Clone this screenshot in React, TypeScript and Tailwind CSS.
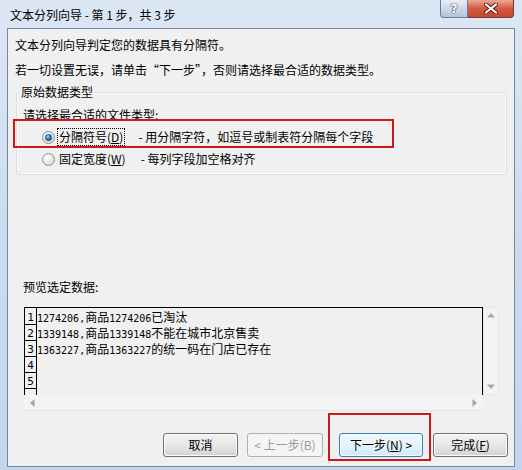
import React from "react";

function Mixed({ text }: { text: string }) {
  const parts = text.match(/[\x00-\x7f]+|[^\x00-\x7f]+/g) || [];
  return (
    <>
      {parts.map((p, i) =>
        /^[\x00-\x7f]+$/.test(p) ? (
          <span key={i} className="font-['DejaVu_Sans_Mono',monospace] text-[10px] whitespace-pre">
            {p}
          </span>
        ) : (
          <span key={i} className="text-[12px]">
            {p}
          </span>
        )
      )}
    </>
  );
}

function Radio({ checked }: { checked?: boolean }) {
  return (
    <svg width="13" height="13" viewBox="0 0 13 13" className="shrink-0">
      <defs>
        <radialGradient id={checked ? "rgc" : "rgu"} cx="0.4" cy="0.35" r="0.7">
          <stop offset="0" stopColor="#ffffff" />
          <stop offset="1" stopColor="#d6d6d6" />
        </radialGradient>
        <radialGradient id="dot" cx="0.4" cy="0.35" r="0.7">
          <stop offset="0" stopColor="#8fd0f5" />
          <stop offset="0.6" stopColor="#2b79b8" />
          <stop offset="1" stopColor="#15467a" />
        </radialGradient>
      </defs>
      <circle cx="6.5" cy="6.5" r="6" fill={`url(#${checked ? "rgc" : "rgu"})`} stroke="#8e8f8f" strokeWidth="1" />
      {checked && <circle cx="6.5" cy="6.5" r="3.2" fill="url(#dot)" stroke="#1d4f7f" strokeWidth="0.6" />}
    </svg>
  );
}

function Btn({
  children,
  variant = "normal",
  w,
}: {
  children: React.ReactNode;
  variant?: "normal" | "disabled" | "default";
  w: string;
}) {
  const base = "h-[24px] rounded-[3px] border flex items-center justify-center text-[12px] leading-4 shrink-0";
  const cls =
    variant === "disabled"
      ? "border-[#adb2b5] bg-[#f4f4f4] text-[#9a9a9a]"
      : variant === "default"
      ? "border-[#3c7fb1] bg-gradient-to-b from-[#f1f8fd] via-[#e6f3fb] to-[#cde8f8] shadow-[inset_0_0_0_1px_#f4fbff] text-black"
      : "border-[#707070] bg-gradient-to-b from-[#f2f2f2] via-[#e8e8e8] to-[#d2d2d2] shadow-[inset_0_0_0_1px_#fbfbfb] text-black";
  return <div className={`${base} ${cls} ${w}`}>{children}</div>;
}

export default function App() {
  const rows = [
    "1274206,商品1274206已淘汰",
    "1339148,商品1339148不能在城市北京售卖",
    "1363227,商品1363227的统一码在门店已存在",
    "",
    "",
    "",
  ];
  return (
    <div className="w-[522px] h-[470px] relative overflow-hidden bg-gradient-to-b from-[#dce7f4] via-[#cbdcf0] to-[#c3d6ee] font-['Noto_Sans_CJK_SC',sans-serif] text-[12px] text-black leading-4 flex flex-col">
      {/* Title bar */}
      <div className="h-[28px] flex items-start shrink-0">
        <div className="pl-[10px] pt-[6px] leading-[18px] text-[12px] text-black">文本分列向导 - 第 1 步，共 3 步</div>
        <div className="ml-auto mr-[8px] flex">
          <div className="w-[28px] h-[18px] rounded-bl-[4px] border border-t-0 border-[#6c7b91] bg-gradient-to-b from-[#e6eef8] via-[#cdd9e8] to-[#b3c4da] flex items-center justify-center">
            <span className="font-['DejaVu_Sans',sans-serif] font-bold text-[13px] leading-none text-white [text-shadow:0_0_1px_#334,0_0_1px_#334,0_0_1px_#334]">?</span>
          </div>
          <div className="w-[46px] h-[18px] rounded-br-[4px] border border-l-0 border-t-0 border-[#6b3a34] bg-gradient-to-b from-[#eba797] via-[#d25a44] to-[#c9452d] flex items-center justify-center">
            <svg width="14" height="11" viewBox="0 0 14 11">
              <path d="M2 1.5 L12 9.5 M12 1.5 L2 9.5" stroke="#4a1d16" strokeWidth="4" strokeLinecap="round" />
              <path d="M2 1.5 L12 9.5 M12 1.5 L2 9.5" stroke="#ffffff" strokeWidth="2.2" strokeLinecap="round" />
            </svg>
          </div>
        </div>
      </div>

      {/* Client area */}
      <div className="mx-[7px] mb-[3px] flex-1 border border-[#7587a0] bg-[#f0f0f0] flex flex-col">
        <div className="mt-[8px] pl-[7px] h-4">文本分列向导判定您的数据具有分隔符。</div>
        <div className="mt-[9px] pl-[7px] h-4">若一切设置无误，请单击“下一步”，否则请选择最合适的数据类型。</div>

        <fieldset className="mt-[6px] ml-[8px] mr-[7px] h-[91px] border border-[#d5dfe5] rounded-[3px] p-0 m-0 shadow-[inset_0_0_0_1px_#fafafa]">
          <legend className="ml-[3px] px-[1px] leading-4">原始数据类型</legend>
          <div className="pl-[6px] mt-[7px] h-4">请选择最合适的文件类型:</div>
          <div className="mt-[5px] h-[18px] flex items-center pl-[25px]">
            <Radio checked />
            <div className="ml-[2px] h-[18px] px-[1px] border border-dotted border-black flex items-center">
              分隔符号(<span className="underline">D</span>)
            </div>
            <div className="ml-[13px]">- 用分隔字符，如逗号或制表符分隔每个字段</div>
          </div>
          <div className="mt-[4px] h-[18px] flex items-center pl-[25px]">
            <Radio />
            <div className="ml-[2px] h-[18px] px-[1px] border border-transparent flex items-center">
              固定宽度(<span className="underline">W</span>)
            </div>
            <div className="ml-[13px]">- 每列字段加空格对齐</div>
          </div>
        </fieldset>

        <div className="mt-[104px] pl-[15px] h-4">预览选定数据:</div>

        <div className="mt-[12px] ml-[16px] flex">
          <div className="flex flex-col w-[459px]">
            <div className="h-[88px] border-t border-l border-r border-black flex overflow-hidden">
              <div className="w-[12px] border-r border-black pt-[1px] shrink-0">
                {[1, 2, 3, 4, 5, 6].map((n) => (
                  <div
                    key={n}
                    className="h-[16px] border-b border-black flex items-end justify-center font-['DejaVu_Sans_Mono',monospace] text-[11px] leading-[13px]"
                  >
                    {n <= 5 ? n : ""}
                  </div>
                ))}
              </div>
              <div className="pt-[1px] flex-1">
                {rows.map((r, i) => (
                  <div key={i} className="h-[16px] leading-[16px] whitespace-nowrap">
                    <Mixed text={r} />
                  </div>
                ))}
              </div>
            </div>
            <div className="h-[16px] bg-[#f3f3f3] border-b border-[#e4e4e4] flex items-center justify-between px-[6px]">
              <svg width="5" height="8" viewBox="0 0 5 8">
                <path d="M4.5 0 L0 4 L4.5 8 Z" fill="#a6a6a6" />
              </svg>
              <svg width="5" height="8" viewBox="0 0 5 8">
                <path d="M0.5 0 L5 4 L0.5 8 Z" fill="#a6a6a6" />
              </svg>
            </div>
          </div>
          <div className="w-[16px] h-[88px] bg-[#f3f3f3] border border-[#e6e6e6] flex flex-col items-center justify-between py-[5px]">
            <svg width="8" height="5" viewBox="0 0 8 5">
              <path d="M0 4.5 L4 0 L8 4.5 Z" fill="#a6a6a6" />
            </svg>
            <svg width="8" height="5" viewBox="0 0 8 5">
              <path d="M0 0.5 L4 5 L8 0.5 Z" fill="#a6a6a6" />
            </svg>
          </div>
        </div>

        <div className="mt-[22px] flex pl-[155px]">
          <Btn w="w-[75px]">取消</Btn>
          <div className="ml-[9px]">
            <Btn w="w-[76px]" variant="disabled">
              &lt; 上一步(B)
            </Btn>
          </div>
          <div className="ml-[16px]">
            <Btn w="w-[84px]" variant="default">
              下一步(<span className="underline">N</span>)&nbsp;&gt;
            </Btn>
          </div>
          <div className="ml-[10px]">
            <Btn w="w-[75px]">
              完成(<span className="underline">F</span>)
            </Btn>
          </div>
        </div>
      </div>

      {/* Red annotation boxes */}
      <div className="absolute left-[13px] top-[119px] w-[381px] h-[29px] border-2 border-[#cc1818] pointer-events-none" />
      <div className="absolute left-[328px] top-[413px] w-[103px] h-[48px] border-2 border-[#cc1818] pointer-events-none" />
    </div>
  );
}
